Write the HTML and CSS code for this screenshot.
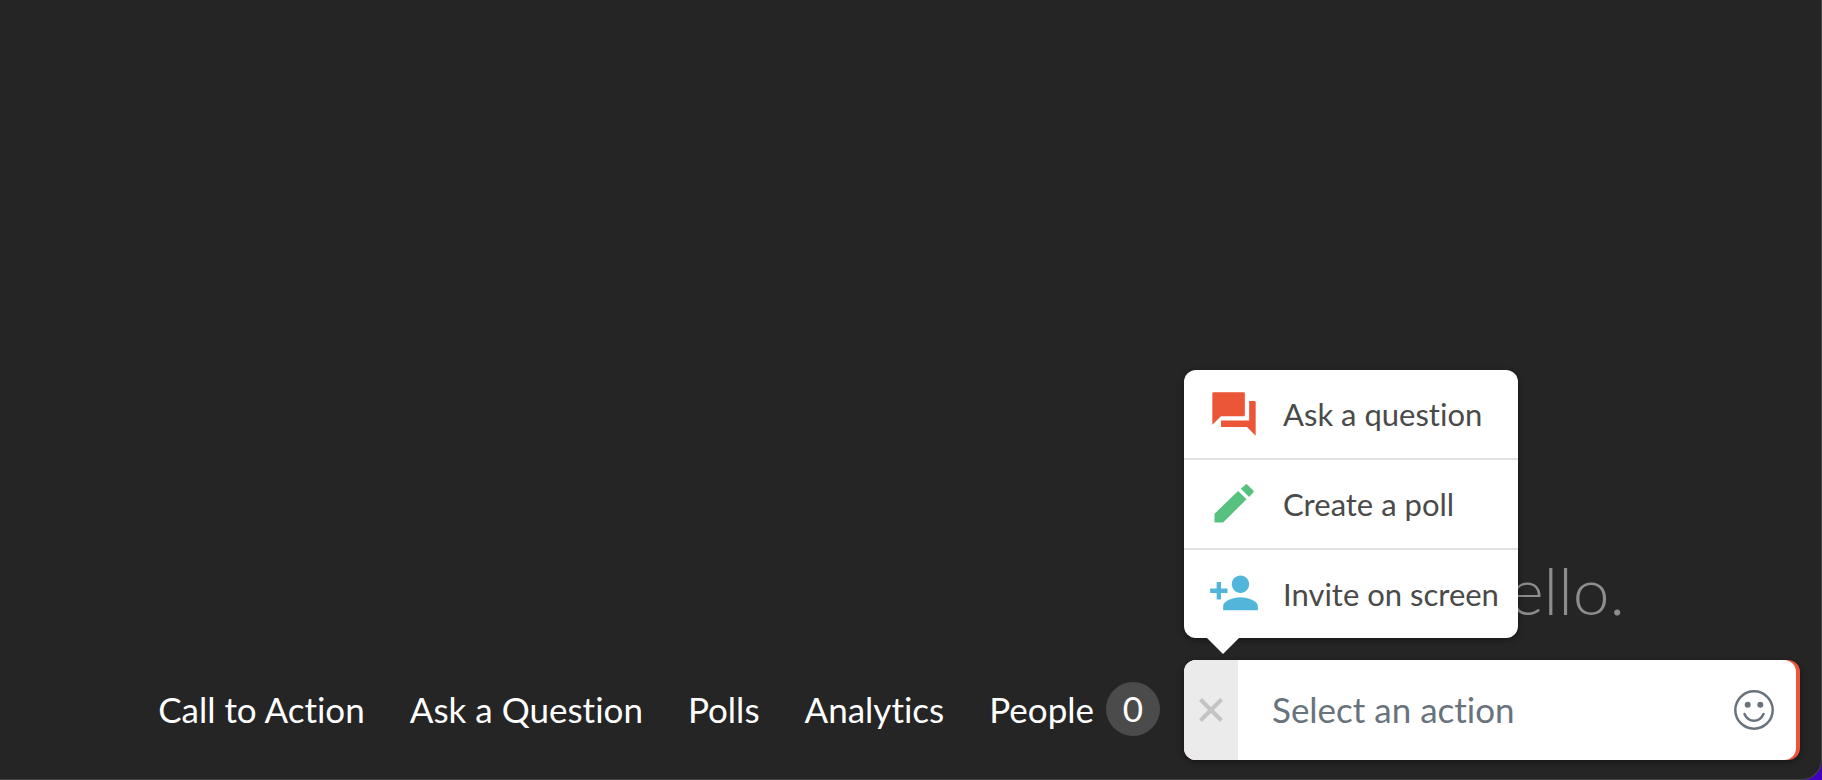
FILE: index.html
```html
<!DOCTYPE html>
<html lang="en">
<head>
  <meta charset="utf-8">
  <title>Live Chat</title>
  <link rel="stylesheet" href="styles.css">
</head>
<body>
  <div class="window">
    <main class="stage">
      <p class="empty-message">Say hello.</p>
    </main>

    <footer class="dock">
      <nav class="nav">
        <a href="#">Call to Action</a>
        <a href="#">Ask a Question</a>
        <a href="#">Polls</a>
        <a href="#">Analytics</a>
        <a href="#" class="people">People <span class="count">0</span></a>
      </nav>

      <div class="composer">
        <div class="menu">
          <button class="menu-item" type="button">
            <svg class="icon question" viewBox="0 0 24 24"><path d="M21.5 6H19v9H6v2.500c0 .3.2.5.5.5H18l4 4V6.500c0-.3-.2-.5-.5-.5zM17 12.500v-10c0-.3-.2-.5-.5-.5h-14c-.3 0-.5.2-.5.5V17l4-4h10.500c.3 0 .5-.2.5-.5z"/></svg>
            Ask a question
          </button>
          <button class="menu-item" type="button">
            <svg class="icon poll" viewBox="0 .5 24 24"><path d="M3 17v4h4L17.800 10.300l-3.900-3.800L3 17zM20.900 7.200c.3-.3.3-.6 0-.9l-2.700-2.700c-.3-.3-.7-.3-1 0l-2 1.900 3.800 3.800 1.900-2.100z"/></svg>
            Create a poll
          </button>
          <button class="menu-item" type="button">
            <svg class="icon invite" viewBox="0 .5 24 24"><path d="M15 12c2.210 0 4-1.790 4-4s-1.790-4-4-4-4 1.790-4 4 1.790 4 4 4zm-9-2V7H4v3H1v2h3v3h2v-3h3v-2H6zm9 4c-2.670 0-8 1.340-8 4v2h16v-2c0-2.660-5.330-4-8-4z"/></svg>
            Invite on screen
          </button>
        </div>

        <div class="field">
          <button class="close" type="button" aria-label="Close">
            <svg viewBox="0 0 24 24"><path d="M1.500 1.500l21 21M22.500 1.500l-21 21"/></svg>
          </button>
          <input class="message" type="text" placeholder="Select an action" aria-label="Message">
          <button class="emoji" type="button" aria-label="Emoji">
            <svg viewBox="0 0 40 40">
              <circle class="face" cx="20" cy="20" r="18.700"/>
              <circle cx="13.700" cy="14.700" r="3"/>
              <circle cx="26.300" cy="14.700" r="3"/>
              <path class="face" d="M10.500 24c4 9 15 9 19 0"/>
            </svg>
          </button>
        </div>
      </div>
    </footer>
  </div>
</body>
</html>
```
FILE: styles.css
```css
* {
  box-sizing: border-box;
}

body {
  margin: 0;
  background-color: #4000c0;
  font-family: Lato, sans-serif;
  font-variant-ligatures: none;
}

button {
  border: none;
  padding: 0;
  font-family: inherit;
  font-variant-ligatures: none;
  cursor: pointer;
}

.window {
  display: flex;
  flex-direction: column;
  min-height: 100vh;
  background-color: #252525;
  border-right: 1px solid #444;
  border-bottom: 1px solid #444;
  border-bottom-right-radius: 20px;
}

.stage {
  flex: 1;
  display: flex;
  justify-content: flex-end;
  align-items: flex-end;
  padding: 0 196px 30px;
}

.empty-message {
  margin: 0;
  font-size: 66px;
  font-weight: 300;
  line-height: 80px;
  color: #8d8d8d;
}

.dock {
  display: flex;
  justify-content: flex-end;
  align-items: center;
  gap: 24px;
  padding: 0 21px 19px;
}

.nav {
  display: flex;
  align-items: center;
  gap: 45px;
  padding-bottom: 3px;
  font-size: 35px;
  white-space: nowrap;
}

.nav a {
  color: #fff;
  text-decoration: none;
}

.people {
  display: flex;
  align-items: center;
  gap: 12px;
}

.count {
  width: 54px;
  height: 54px;
  line-height: 52px;
  border-radius: 50%;
  background-color: #4b4b4b;
  text-align: center;
}

.composer {
  position: relative;
  flex: 0 1 616px;
  min-width: 0;
  padding-right: 4px;
  background-color: #eb5637;
  border-radius: 12px;
  box-shadow: 0 2px 6px rgba(0, 0, 0, 0.4);
}

.field {
  display: flex;
  height: 100px;
  background-color: #fff;
  border-radius: 12px;
  overflow: hidden;
}

.close {
  flex: none;
  width: 54px;
  background-color: #ebebeb;
}

.close svg {
  display: block;
  width: 24px;
  margin: auto;
  fill: none;
  stroke: #c3c3c3;
  stroke-width: 4;
}

.message {
  flex: 1;
  min-width: 0;
  border: none;
  outline: none;
  padding: 0 0 2px 34px;
  background: none;
  font-family: inherit;
  font-size: 35px;
  font-variant-ligatures: none;
}

.message::placeholder {
  color: #68737d;
  opacity: 1;
}

.emoji {
  flex: none;
  width: 84px;
  background: none;
}

.emoji svg {
  display: block;
  width: 40px;
  margin: auto;
  fill: #68737d;
}

.emoji .face {
  fill: none;
  stroke: #68737d;
  stroke-width: 2.5;
  stroke-linecap: round;
}

/* popup menu above the close button */
.menu {
  position: absolute;
  left: 0;
  bottom: 122px;
  width: 334px;
  background-color: #fff;
  border-radius: 12px;
  box-shadow: 0 2px 6px rgba(0, 0, 0, 0.4);
}

.menu::after {
  content: "";
  position: absolute;
  top: 100%;
  left: 23px;
  border: 16px solid transparent;
  border-top-color: #fff;
  border-bottom: none;
}

.menu-item {
  display: flex;
  align-items: center;
  gap: 23px;
  width: 100%;
  height: 90px;
  padding-left: 24px;
  border-bottom: 2px solid #e1e1e1;
  background: none;
  font-size: 31px;
  color: #4a4a4a;
  white-space: nowrap;
}

.menu-item:last-child {
  height: 88px;
  border-bottom: none;
}

.icon {
  flex: none;
  width: 52px;
  height: 52px;
}

.question {
  fill: #eb5637;
}

.poll {
  fill: #57c17f;
}

.invite {
  fill: #52b6db;
}
```
